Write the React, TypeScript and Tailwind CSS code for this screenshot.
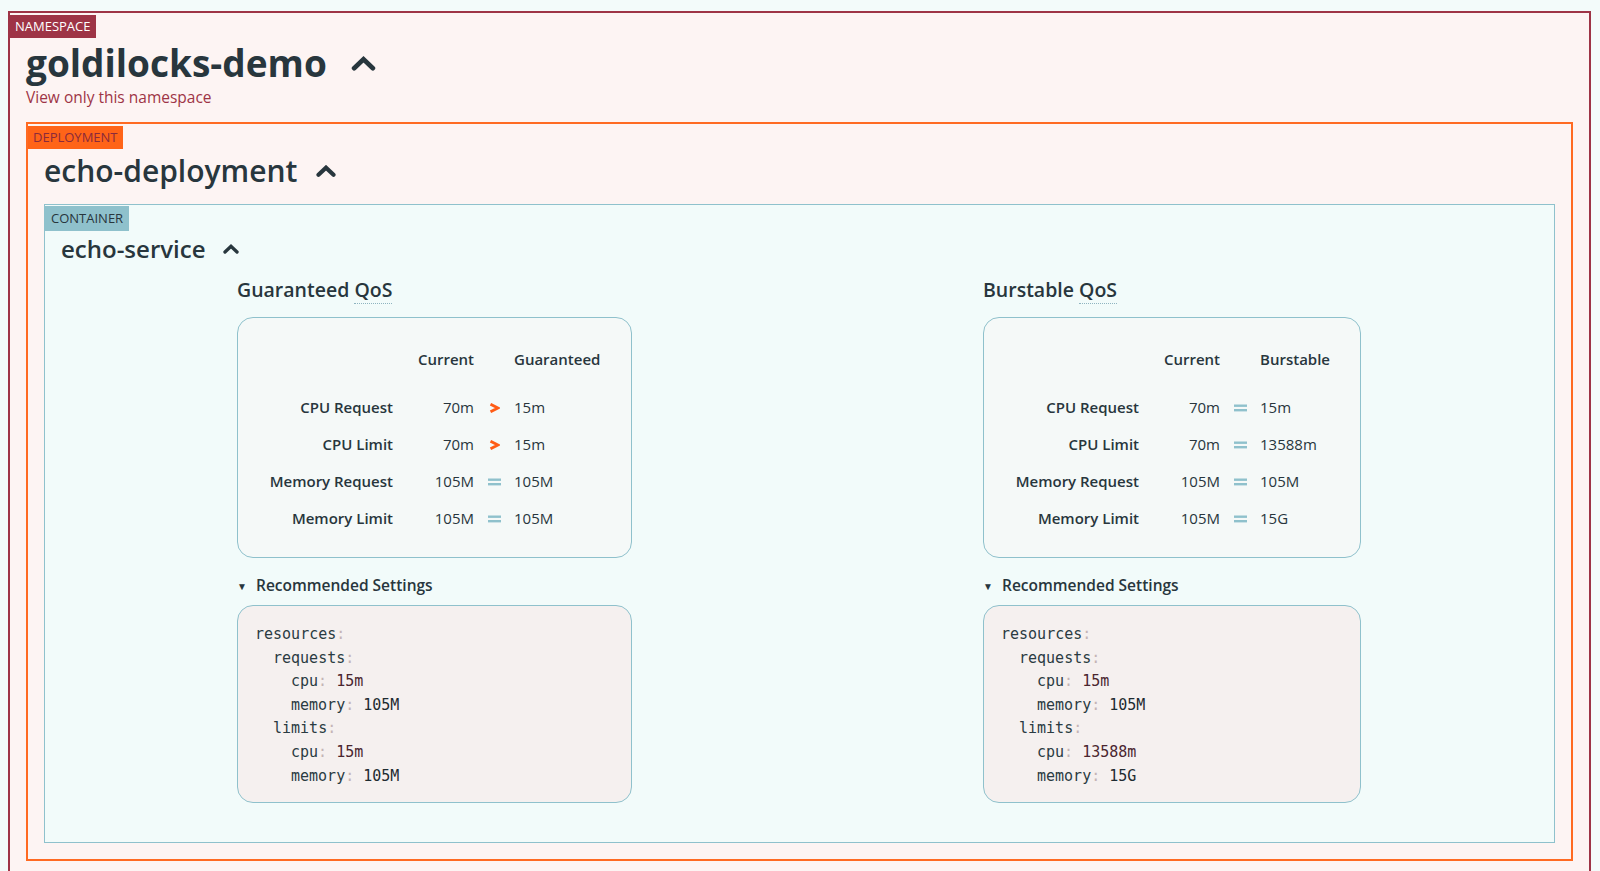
import React from 'react';

type Row = { label: string; current: string; sym: 'gt' | 'eq'; value: string };
type CodeLine = { indent: number; key: string; value?: string; valueTone?: 'red' | 'dark' };

const Chevron: React.FC<{ className: string; stroke?: number }> = ({ className, stroke = 4.5 }) => (
  <svg className={className} viewBox="0 0 24 14" fill="none">
    <path d="M3 11.5 L12 3 L21 11.5" stroke="#28363d" strokeWidth={stroke} strokeLinecap="round" strokeLinejoin="miter" />
  </svg>
);

const GreaterIcon = () => (
  <svg className="w-[11px] h-[10px]" viewBox="0 0 11 10" fill="none">
    <path d="M1.5 1.2 L9 5 L1.5 8.8" stroke="#ff5c16" strokeWidth="2.8" strokeLinejoin="miter" />
  </svg>
);

const EqualIcon = () => (
  <svg className="w-[13px] h-[8px]" viewBox="0 0 13 8" fill="none">
    <rect x="0" y="0.5" width="13" height="2.4" fill="#8fc1cc" />
    <rect x="0" y="5" width="13" height="2.4" fill="#8fc1cc" />
  </svg>
);

const QosCard: React.FC<{
  title: string;
  header: string;
  rows: Row[];
  code: CodeLine[];
  width: string;
}> = ({ title, header, rows, code, width }) => (
  <div className={width}>
    <h4 className="text-[19.5px] font-semibold leading-[24px] text-[#28363d]">
      {title} <span className="border-b border-dotted border-[#8fb4c0]">QoS</span>
    </h4>
    <div className="mt-[15px] rounded-[16px] border border-[#8fc1cc] bg-[#f5f9f8] pt-[23px] pb-[20px]">
      <div className="grid grid-cols-[155px_81px_40px_1fr] h-[37px] items-center text-[15px] font-semibold">
        <span />
        <span className="text-right">Current</span>
        <span />
        <span>{header}</span>
      </div>
      <div className="mt-[11px]">
        {rows.map((r) => (
          <div key={r.label} className="grid grid-cols-[155px_81px_40px_1fr] h-[37px] items-center text-[15px]">
            <span className="text-right font-semibold">{r.label}</span>
            <span className="text-right">{r.current}</span>
            <span className="flex justify-center">{r.sym === 'gt' ? <GreaterIcon /> : <EqualIcon />}</span>
            <span>{r.value}</span>
          </div>
        ))}
      </div>
    </div>
    <div className="mt-[19px] flex items-center h-[18px] text-[15.5px] font-semibold">
      <span className="text-[10px] w-[19px] leading-none">▼</span>
      <span>Recommended Settings</span>
    </div>
    <pre className="mt-[10px] rounded-[16px] border border-[#8fc1cc] bg-[#f5f0ef] pl-[17px] pt-[17px] pb-[14px] font-['DejaVu_Sans_Mono',monospace] text-[15px] leading-[23.6px] text-[#2a3b42]">
      {code.map((l, i) => (
        <div key={i} style={{ paddingLeft: l.indent * 18 }}>
          <span>{l.key}</span>
          <span className="text-[#c4b4b6]">:</span>
          {l.value && (
            <span className={l.valueTone === 'red' ? 'text-[#4a2630]' : 'text-[#1e2b31]'}> {l.value}</span>
          )}
        </div>
      ))}
    </pre>
  </div>
);

const guaranteedRows: Row[] = [
  { label: 'CPU Request', current: '70m', sym: 'gt', value: '15m' },
  { label: 'CPU Limit', current: '70m', sym: 'gt', value: '15m' },
  { label: 'Memory Request', current: '105M', sym: 'eq', value: '105M' },
  { label: 'Memory Limit', current: '105M', sym: 'eq', value: '105M' },
];

const burstableRows: Row[] = [
  { label: 'CPU Request', current: '70m', sym: 'eq', value: '15m' },
  { label: 'CPU Limit', current: '70m', sym: 'eq', value: '13588m' },
  { label: 'Memory Request', current: '105M', sym: 'eq', value: '105M' },
  { label: 'Memory Limit', current: '105M', sym: 'eq', value: '15G' },
];

const codeFor = (reqCpu: string, reqMem: string, limCpu: string, limMem: string): CodeLine[] => [
  { indent: 0, key: 'resources' },
  { indent: 1, key: 'requests' },
  { indent: 2, key: 'cpu', value: reqCpu, valueTone: 'red' },
  { indent: 2, key: 'memory', value: reqMem, valueTone: 'dark' },
  { indent: 1, key: 'limits' },
  { indent: 2, key: 'cpu', value: limCpu, valueTone: 'red' },
  { indent: 2, key: 'memory', value: limMem, valueTone: 'dark' },
];

export default function App() {
  return (
    <div className="min-h-screen bg-[#f3fbfa] pt-[11px] pl-2 pr-[9px] font-['Open_Sans',sans-serif] text-[#28363d]">
      {/* Namespace */}
      <section className="border-2 border-[#9e3446] bg-[#fdf4f3] pb-10">
        <div className="inline-block bg-[#9e3446] px-[5px] text-[13px] leading-[23px] text-white">NAMESPACE</div>
        <div className="px-4">
          <h1 className="flex items-center text-[37px] font-bold leading-[50px]">
            goldilocks-demo
            <Chevron className="ml-6 w-[25px] h-[15px]" />
          </h1>
          <a className="block text-[15.5px] leading-[18px] text-[#9e3446]">View only this namespace</a>

          {/* Deployment */}
          <section className="mt-[16px] border-2 border-[#ff6a22] bg-[#fdf4f3] pb-4">
            <div className="inline-block bg-[#ff6418] px-[5px] text-[13px] leading-[23px] text-[#8a2a3c]">DEPLOYMENT</div>
            <div className="px-4">
              <h2 className="mt-[4px] flex items-center text-[30px] font-semibold leading-[36px]">
                echo-deployment
                <Chevron className="ml-[19px] w-[20px] h-[12px]" stroke={5} />
              </h2>

              {/* Container */}
              <section className="mt-[15px] border border-[#8fc1cc] bg-[#f2fbfa] pb-[39px]">
                <div className="inline-block bg-[#8fc1cc] px-[6px] text-[13px] leading-[25px] text-[#28363d]">CONTAINER</div>
                <h3 className="mt-[3px] px-4 flex items-center text-[24px] font-semibold leading-[29px]">
                  echo-service
                  <Chevron className="ml-[17px] w-[16px] h-[10px]" stroke={5} />
                </h3>
                <div className="mt-[15px] flex pl-[192px] gap-[351px]">
                  <QosCard
                    title="Guaranteed"
                    header="Guaranteed"
                    rows={guaranteedRows}
                    code={codeFor('15m', '105M', '15m', '105M')}
                    width="w-[395px]"
                  />
                  <QosCard
                    title="Burstable"
                    header="Burstable"
                    rows={burstableRows}
                    code={codeFor('15m', '105M', '13588m', '15G')}
                    width="w-[378px]"
                  />
                </div>
              </section>
            </div>
          </section>
        </div>
      </section>
    </div>
  );
}
